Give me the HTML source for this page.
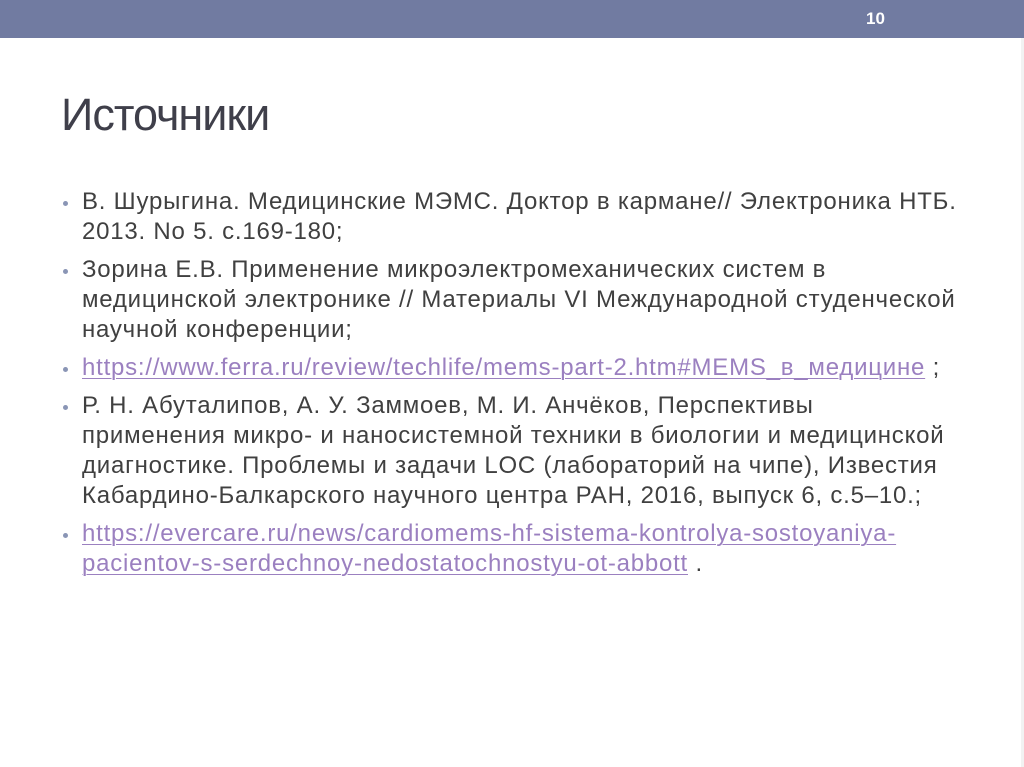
<!DOCTYPE html>
<html><head><meta charset="utf-8"><style>
html,body{margin:0;padding:0;background:#fff;}
body{width:1024px;height:767px;position:relative;overflow:hidden;font-family:"Liberation Sans","DejaVu Sans",sans-serif;}
.bar{position:absolute;left:0;top:0;width:1024px;height:38px;background:#717ba1;}
.num{position:absolute;left:866px;top:9px;color:#fff;font-weight:bold;font-size:17px;}
.edge{position:absolute;right:0;top:38px;width:3px;height:729px;background:#f2f2f2;}
h1{position:absolute;left:61px;top:89px;margin:0;font-weight:normal;font-size:45px;color:#3f3f4a;letter-spacing:-1px;}
ul{position:absolute;left:82px;top:187px;margin:0;padding:0;list-style:none;width:930px;}
li{position:relative;font-size:24px;line-height:30px;color:#404040;margin-bottom:8px;white-space:nowrap;letter-spacing:0.78px;}
li:before{content:"";position:absolute;left:-19px;top:14px;width:5px;height:5px;border-radius:50%;background:#8a95b5;}
a{color:#9b80c0;text-decoration:underline;text-decoration-thickness:1px;text-underline-offset:3px;}
</style></head><body>
<div class="bar"></div><div class="num">10</div><div class="edge"></div>
<h1>Источники</h1>
<ul>
<li>В. Шурыгина. Медицинские МЭМС. Доктор в кармане// Электроника НТБ.<br>2013. No 5. с.169-180;</li>
<li>Зорина Е.В. Применение микроэлектромеханических систем в<br>медицинской электронике // Материалы VI Международной студенческой<br>научной конференции;</li>
<li><a>https://www.ferra.ru/review/techlife/mems-part-2.htm#MEMS_в_медицине</a> ;</li>
<li>Р. Н. Абуталипов, А. У. Заммоев, М. И. Анчёков, Перспективы<br>применения микро- и наносистемной техники в биологии и медицинской<br>диагностике. Проблемы и задачи LOC (лабораторий на чипе), Известия<br>Кабардино-Балкарского научного центра РАН, 2016, выпуск 6, с.5–10.;</li>
<li><a>https://evercare.ru/news/cardiomems-hf-sistema-kontrolya-sostoyaniya-<br>pacientov-s-serdechnoy-nedostatochnostyu-ot-abbott</a> .</li>
</ul>
</body></html>
